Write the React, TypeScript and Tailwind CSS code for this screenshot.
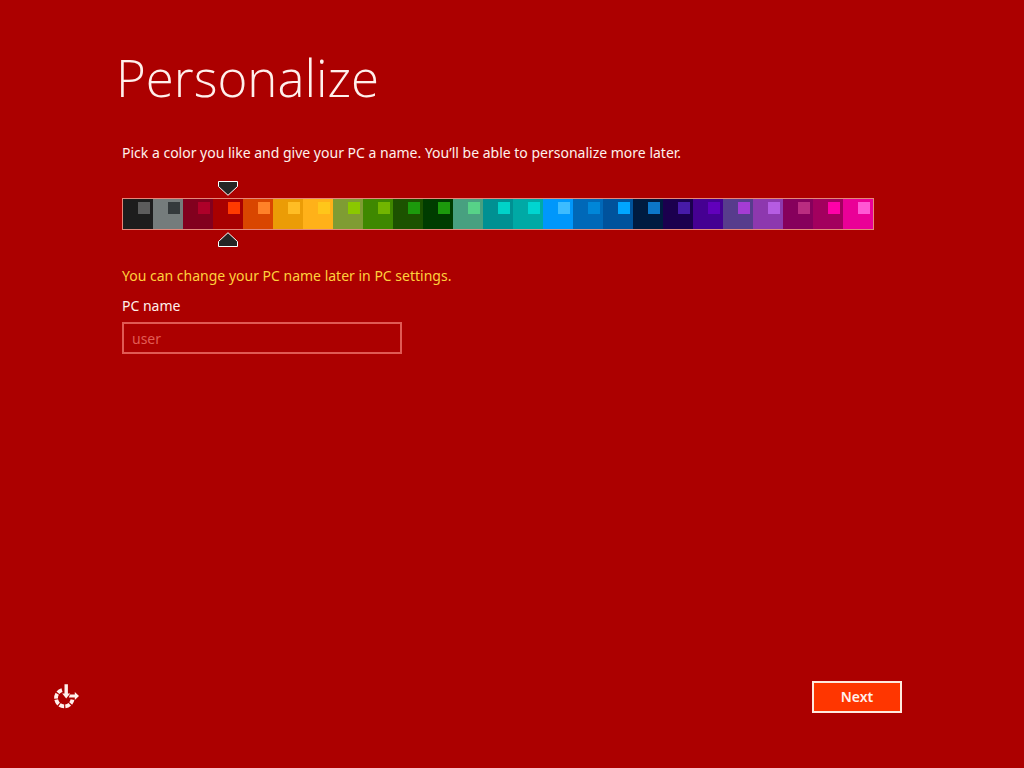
import { useState } from "react";

const colors = [
  { name: "Black", base: "bg-[#1d1d1d]", accent: "bg-[#5c5c5c]" },
  { name: "Gray", base: "bg-[#757c7c]", accent: "bg-[#343a3c]" },
  { name: "Crimson", base: "bg-[#82001e]", accent: "bg-[#ae0029]" },
  { name: "Red", base: "bg-[#a80000]", accent: "bg-[#ff3a00]" },
  { name: "Orange", base: "bg-[#d94600]", accent: "bg-[#ff8128]" },
  { name: "Amber", base: "bg-[#eb9c06]", accent: "bg-[#ffbd24]" },
  { name: "Yellow", base: "bg-[#ffb119]", accent: "bg-[#ffc61a]" },
  { name: "Olive", base: "bg-[#7f9c33]", accent: "bg-[#8bc800]" },
  { name: "Green", base: "bg-[#3f8800]", accent: "bg-[#72b500]" },
  { name: "Forest", base: "bg-[#1c5200]", accent: "bg-[#1c9a0c]" },
  { name: "Dark green", base: "bg-[#003c00]", accent: "bg-[#1c9a0c]" },
  { name: "Sea green", base: "bg-[#48a080]", accent: "bg-[#57d288]" },
  { name: "Teal", base: "bg-[#009092]", accent: "bg-[#00d2c8]" },
  { name: "Turquoise", base: "bg-[#00a9a5]", accent: "bg-[#00d5d0]" },
  { name: "Sky blue", base: "bg-[#0097fb]", accent: "bg-[#3dbcff]" },
  { name: "Blue", base: "bg-[#0068b8]", accent: "bg-[#0086d8]" },
  { name: "Cobalt", base: "bg-[#00529c]", accent: "bg-[#00a6ff]" },
  { name: "Navy", base: "bg-[#001b40]", accent: "bg-[#0c77c8]" },
  { name: "Midnight", base: "bg-[#1b004e]", accent: "bg-[#471ba8]" },
  { name: "Indigo", base: "bg-[#450092]", accent: "bg-[#6100bb]" },
  { name: "Slate", base: "bg-[#573c8c]", accent: "bg-[#a43cd4]" },
  { name: "Violet", base: "bg-[#8d38ae]", accent: "bg-[#b55ce2]" },
  { name: "Plum", base: "bg-[#86005c]", accent: "bg-[#b92c80]" },
  { name: "Magenta", base: "bg-[#a2005e]", accent: "bg-[#ff00a8]" },
  { name: "Pink", base: "bg-[#ea0097]", accent: "bg-[#ff58d4]" },
];

const Marker = ({ className }: { className: string }) => (
  <svg
    viewBox="0 0 20 15"
    className={`absolute left-1/2 -translate-x-1/2 w-5 h-[15px] ${className}`}
    aria-hidden="true"
  >
    <path
      d="M0.5 0.5H19.5V5.5L10 14.3L0.5 5.5Z"
      fill="#252525"
      stroke="#fff"
    />
  </svg>
);

const ColorPicker = () => {
  const [selected, setSelected] = useState("Red");

  return (
    <fieldset
      aria-label="Color"
      className="mt-[35px] border border-[#e6877a] flex h-8 max-w-[752px]"
    >
      {colors.map(({ name, base, accent }) => (
        <label key={name} className={`relative flex-1 cursor-pointer ${base}`}>
          <input
            type="radio"
            name="color"
            value={name}
            aria-label={name}
            checked={selected === name}
            onChange={() => setSelected(name)}
            className="sr-only"
          />
          <span className={`absolute top-[3px] right-[3px] size-3 ${accent}`} />
          {selected === name && (
            <>
              <Marker className="-top-[18px]" />
              <Marker className="-bottom-[18px] rotate-180" />
            </>
          )}
        </label>
      ))}
    </fieldset>
  );
};

const EaseOfAccessIcon = () => (
  <svg viewBox="0 0 26 26" className="w-[26px] h-[26px]" aria-hidden="true">
    <path
      d="M9 6.1A8.3 8.3 0 1 0 19.5 15.6"
      fill="none"
      stroke="#fff0ec"
      strokeWidth="3.8"
      strokeDasharray="4.9 1.2"
    />
    <path d="M11.5 0.3H14.9V9.4H17.2L13.2 14.4L9.2 9.4H11.5Z" fill="#fff0ec" />
    <path d="M17 10.6H21.8V8L26 12L21.8 16V13.4H15.8Z" fill="#fff0ec" />
  </svg>
);

export default function App() {
  return (
    <div className="min-h-screen flex flex-col bg-[#ac0000] text-[14px] leading-5 text-[#fff0ec] font-['Noto_Sans','Open_Sans',sans-serif]">
      <main className="flex-1 pt-[47px] px-[122px]">
        <h1 className="-ml-1.5 text-[51px] leading-[60px] font-light font-['Open_Sans',sans-serif]">
          Personalize
        </h1>
        <p className="mt-9">
          Pick a color you like and give your PC a name. You’ll be able to
          personalize more later.
        </p>
        <ColorPicker />
        <p className="mt-9 text-[#ffd03c]">
          You can change your PC name later in PC settings.
        </p>
        <label htmlFor="pc-name" className="mt-[10px] block w-fit">
          PC name
        </label>
        <input
          id="pc-name"
          type="text"
          placeholder="user"
          className="mt-[6px] block h-8 w-full max-w-[280px] border-2 border-[#e05a54] px-2 placeholder:text-[#e25c54] outline-none"
        />
      </main>
      <footer className="flex items-center justify-between pl-[53px] pr-[122px] pb-[55px]">
        <button type="button" aria-label="Ease of access">
          <EaseOfAccessIcon />
        </button>
        <button
          type="button"
          className="h-8 w-[90px] border-2 border-[#ffeadf] bg-[#ff3600] font-semibold"
        >
          Next
        </button>
      </footer>
    </div>
  );
}
